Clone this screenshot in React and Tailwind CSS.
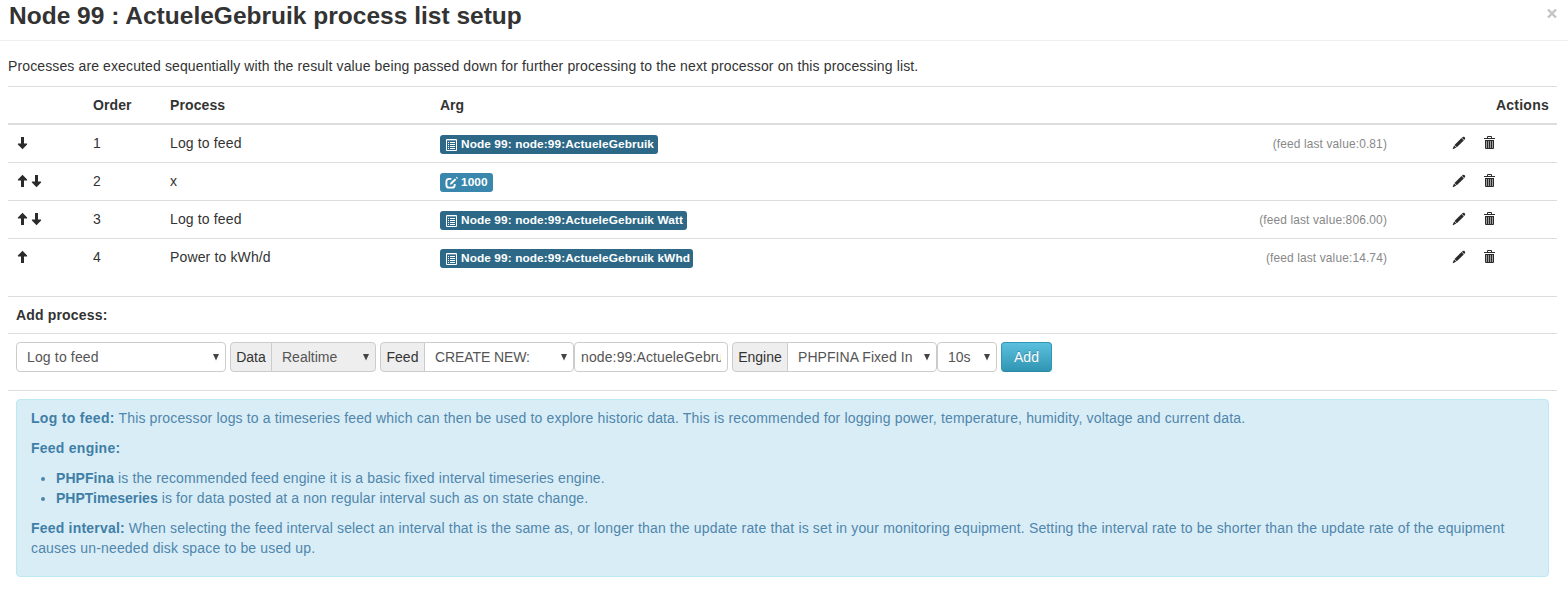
const ArrowUp = () => (
  <svg className="block h-[14px] w-[14px]" viewBox="0 0 14 14" fill="#2b2b2b">
    <path d="M6.5 0.8 L11.1 5.4 V6.6 H8 V13 H5 V6.6 H1.9 V5.4 Z" />
  </svg>
);

const ArrowDown = () => (
  <svg className="block h-[14px] w-[14px]" viewBox="0 0 14 14" fill="#2b2b2b">
    <path d="M6.5 13.2 L11.1 8.6 V7.4 H8 V1 H5 V7.4 H1.9 V8.6 Z" />
  </svg>
);

const Pencil = () => (
  <svg className="block h-[14px] w-[14px]" viewBox="0 0 14 14" fill="#2b2b2b">
    <path d="M10.7 1 Q11.9 0.4 12.8 1.3 Q13.6 2.3 12.9 3.2 L12.1 4 L9.9 1.8 Z" />
    <path d="M9.5 2.1 L11.8 4.4 L4.8 11.2 L2.5 8.9 Z" />
    <path d="M2.1 9.4 L4.3 11.6 L1 13.2 L0.7 12.8 Z" />
  </svg>
);

const Trash = () => (
  <svg className="block h-[14px] w-[14px]" viewBox="0 0 14 14" fill="none" stroke="#2b2b2b">
    <path d="M4.5 2.5 V0.5 H8.5 V2.5" />
    <path d="M1 2.5 H12" />
    <path d="M2.5 4 V12.5 H10.5 V4" />
    <path d="M2 4.5 H11" />
    <path d="M4.5 4 V12 M6.5 4 V12 M8.5 4 V12" />
    <path d="M3 4 H10 V12 H3 Z" fill="#2b2b2b" fillOpacity="0.45" stroke="none" />
  </svg>
);

const ListIcon = () => (
  <svg className="block h-[14px] w-[14px]" viewBox="0 0 14 14" fill="none" stroke="#fff">
    <path d="M1.5 1.5 H11.5 V12.5 H1.5 Z" />
    <path d="M2 2.5 H11" strokeOpacity="0.35" />
    <path d="M3 4.5 H4 M5 4.5 H10 M3 6.5 H4 M5 6.5 H10 M3 8.5 H4 M5 8.5 H10 M3 10.5 H4 M5 10.5 H10" />
  </svg>
);

const EditIcon = () => (
  <svg className="block h-[14px] w-[14px]" viewBox="0 0 14 14" fill="#fff">
    <path
      d="M6.4 2.9 H4 Q1.4 3.1 1.4 5.6 V8.9 Q1.4 11.6 4 11.6 H7 Q9.7 11.6 9.7 8.9 V8"
      fill="none"
      stroke="#fff"
      strokeWidth="1.9"
    />
    <path d="M9.9 2.4 L11.3 3.8 L7.1 8 L4.9 8.8 L5.6 6.6 Z" />
    <path d="M10.9 1.5 L11.6 0.8 L12.9 2.1 L12.2 2.9 Z" />
  </svg>
);

const rows = [
  { up: false, down: true, order: 1, process: "Log to feed", arg: "Node 99: node:99:ActueleGebruik", w: "w-[218px]", value: "(feed last value:0.81)" },
  { up: true, down: true, order: 2, process: "x", arg: "1000", w: "w-[53px]", edit: true },
  { up: true, down: true, order: 3, process: "Log to feed", arg: "Node 99: node:99:ActueleGebruik Watt", w: "w-[247px]", value: "(feed last value:806.00)" },
  { up: true, down: false, order: 4, process: "Power to kWh/d", arg: "Node 99: node:99:ActueleGebruik kWhd", w: "w-[253px]", value: "(feed last value:14.74)" },
];

function Badge({ row }) {
  return (
    <span
      className={`mt-[11px] flex h-[18.5px] whitespace-nowrap rounded-[3px] pl-[5px] text-[11.844px] font-bold leading-[18px] tracking-[0.1px] text-white ${row.w} ${row.edit ? "bg-[#3a87ad]" : "bg-[#2d6987]"}`}
    >
      <span className="mr-[2px] mt-[3px] w-[14px]">{row.edit ? <EditIcon /> : <ListIcon />}</span>
      {row.arg}
    </span>
  );
}

function Select({ children, className, caret = "right-[6px]" }) {
  return (
    <div className={`relative flex h-[30px] items-center overflow-hidden whitespace-nowrap border border-[#ccc] pl-[10px] text-[#555] ${className}`}>
      {children}
      <svg className={`absolute top-[11px] h-[7px] w-[6px] ${caret}`} viewBox="0 0 6 7" fill="#444">
        <path d="M0 0 H6 L3 6.5 Z" />
      </svg>
    </div>
  );
}

function Addon({ children, className }) {
  return (
    <div className={`-mr-px flex h-[30px] items-center justify-center rounded-l-[4px] border border-[#ccc] bg-[#eee] ${className}`}>
      {children}
    </div>
  );
}

export default function App() {
  return (
    <div className="h-[597px] w-[1568px] overflow-hidden bg-white font-['Liberation_Sans',Arial,sans-serif] text-[14px] leading-[20px] text-[#333]">
      <header className="flex h-[41px] justify-between border-b border-[#eee] pl-[9px] pr-[11px]">
        <h3 className="-mt-[4px] text-[24.5px] font-bold leading-[40px] tracking-[0.01px]">Node 99 : ActueleGebruik process list setup</h3>
        <svg className="mt-[9px] h-[9px] w-[10px]" viewBox="0 0 10 9" fill="none" stroke="#c4c4c4" strokeWidth="2.4">
          <path d="M1 0.5 L9 8.5 M9 0.5 L1 8.5" />
        </svg>
      </header>

      <main className="px-[8px] pt-[15px]">
        <p className="w-[1530px] whitespace-nowrap tracking-[0.122px]">
          Processes are executed sequentially with the result value being passed down for further processing to the next processor on this processing list.
        </p>

        <section className="mt-[10px] w-[1549px] border-t border-[#ddd]">
          <div className="flex h-[38px] border-b-2 border-[#ddd] pt-[8px] font-bold">
            <span className="w-[85px]" />
            <span className="w-[77px] tracking-[0.1px]">Order</span>
            <span className="w-[270px] tracking-[0.1px]">Process</span>
            <span className="flex-1">Arg</span>
            <span className="pr-[8px] tracking-[0.25px]">Actions</span>
          </div>
          {rows.map((row) => (
            <div key={row.order} className="flex h-[38px] border-b border-[#ddd] last:h-[37px] last:border-b-0">
              <div className="flex w-[85px] pl-[8px] pt-[11px]">
                {row.up && <ArrowUp />}
                {row.down && <ArrowDown />}
              </div>
              <span className="w-[77px] pt-[8px]">{row.order}</span>
              <span className="w-[270px] pt-[8px] tracking-[0.14px]">{row.process}</span>
              <div className="flex-1">
                <div className="-mt-px flex">
                  <Badge row={row} />
                </div>
              </div>
              <span className="pt-[9px] text-[11.9px] tracking-[0.15px] text-[#888]">{row.value}</span>
              <div className="ml-[65px] flex w-[105px] gap-[17px] pt-[11px]">
                <Pencil />
                <Trash />
              </div>
            </div>
          ))}
        </section>

        <section className="mt-[20px] w-[1549px] border-t border-[#ddd]">
          <div className="h-[37px] border-b border-[#ddd] pl-[8px] pt-[8px] font-bold tracking-[0.17px]">Add process:</div>
          <div className="flex h-[57px] gap-[4px] border-b border-[#ddd] pl-[8px] pt-[8px]">
            <Select className="w-[210px] rounded-[4px] tracking-[0.15px]">Log to feed</Select>
            <div className="flex">
              <Addon className="w-[42px]">Data</Addon>
              <Select className="w-[105px] rounded-r-[4px] bg-[#eee]">Realtime</Select>
            </div>
            <div className="flex">
              <Addon className="w-[45px]">Feed</Addon>
              <Select className="w-[150px] rounded-r-[4px] tracking-[-0.1px]">CREATE NEW:</Select>
              <div className="flex h-[30px] w-[154px] items-center rounded-[4px] border border-[#ccc] px-[6px] text-[#555]">
                <span className="overflow-hidden whitespace-nowrap tracking-[0.12px]">node:99:ActueleGebruik</span>
              </div>
            </div>
            <div className="flex">
              <Addon className="w-[56px]">Engine</Addon>
              <Select className="w-[150px] rounded-r-[4px]">
                <span className="w-[116px] overflow-hidden tracking-[0.06px]">PHPFINA Fixed In</span>
              </Select>
              <Select className="w-[60px] rounded-[4px]">10s</Select>
            </div>
            <button className="h-[30px] w-[51px] rounded-[4px] border border-[#2f96b4] border-b-[#2a88a3] bg-linear-to-b from-[#5bc0de] to-[#2f96b4] text-white [text-shadow:0_-1px_0_rgba(0,0,0,0.25)]">
              Add
            </button>
          </div>
          <div className="mx-[8px] mt-[8px] h-[178px] whitespace-nowrap rounded-[4px] border border-[#bce8f1] bg-[#d9edf7] pl-[14px] pr-[35px] pt-[8px]">
            <p className="mb-[10px] tracking-[0.152px] text-[#4f86ab]">
              <b className="tracking-[0.3px] text-[#3f7fa6]">Log to feed:</b> This processor logs to a timeseries feed which can then be used to explore historic data. This is recommended for logging power, temperature, humidity, voltage and current data.
            </p>
            <p className="mb-[10px] font-bold tracking-[0.25px] text-[#3f7fa6]">Feed engine:</p>
            <ul className="mb-[10px] ml-[25px] list-disc tracking-[0.125px] text-[#4f86ab]">
              <li><b className="tracking-[0.06px] text-[#3f7fa6]">PHPFina</b> is the recommended feed engine it is a basic fixed interval timeseries engine.</li>
              <li><b className="tracking-normal text-[#3f7fa6]">PHPTimeseries</b> is for data posted at a non regular interval such as on state change.</li>
            </ul>
            <p className="tracking-[0.152px] text-[#4f86ab]">
              <b className="tracking-[0.2px] text-[#3f7fa6]">Feed interval:</b> When selecting the feed interval select an interval that is the same as, or longer than the update rate that is set in your monitoring equipment. Setting the interval rate to be shorter than the update rate of the equipment
              <br />
              causes un-needed disk space to be used up.
            </p>
          </div>
        </section>
      </main>
    </div>
  );
}
